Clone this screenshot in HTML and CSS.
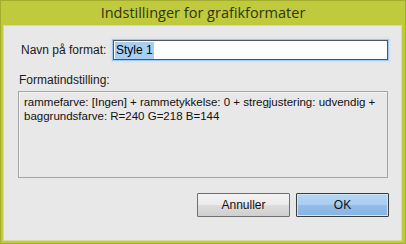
FILE: index.html
```html
<!DOCTYPE html>
<html>
<head>
<meta charset="utf-8">
<link rel="stylesheet" href="styles.css">
</head>
<body>
<div class="window">
  <div class="titlebar">Indstillinger for grafikformater</div>
  <div class="client">
    <div class="name-row">
      <label class="label name-label">Navn på format:</label>
      <div class="input"><span class="sel">Style 1</span></div>
    </div>
    <div class="label section-label">Formatindstilling:</div>
    <div class="box">rammefarve: [Ingen] + rammetykkelse: 0 + stregjustering: udvendig + baggrundsfarve: R=240 G=218 B=144</div>
    <div class="buttons">
      <div class="btn">Annuller</div>
      <div class="btn btn-default">OK</div>
    </div>
  </div>
</div>
</body>
</html>
```

FILE: styles.css
```css
* { box-sizing: border-box; }
html, body { margin: 0; padding: 0; }
body {
  width: 406px;
  height: 244px;
  font-family: "Liberation Sans", Arial, sans-serif;
  font-size: 12px;
  color: #000;
}
.window {
  width: 406px;
  height: 244px;
  background: #bfcb3c;
  border: 1px solid #a3ad30;
  display: flex;
  flex-direction: column;
}
.titlebar {
  height: 24px;
  line-height: 23px;
  text-align: center;
  font-family: "Open Sans", "Noto Sans", sans-serif;
  font-size: 14.5px;
  color: #2f3515;
}
.client {
  flex: 1;
  margin: 0 3px 2px 2px;
  background: #e8e8e8;
  border: 1px solid #d6dc9a;
  padding: 0 0 0 14px;
  display: flex;
  flex-direction: column;
}
.name-row {
  display: flex;
  align-items: center;
  margin-top: 14px;
  height: 20px;
}
.name-label {
  margin-left: 3px;
  width: 92px;
}
.label { color: #1a1a1a; }
.input {
  width: 275px;
  height: 20px;
  background: #fff;
  border: 1px solid #555;
  box-shadow: 0 0 0 1px #9ec8ee, 0 0 2px 2px #cfe3f6;
  padding: 1px 0 0 1px;
  display: flex;
  align-items: center;
}
.sel {
  background: #a8cff0;
  padding: 1px 1px 2px 1px;
  line-height: 14px;
}
.section-label {
  margin-top: 13px;
  margin-left: 1px;
  line-height: 14px;
}
.box {
  margin-top: 4px;
  width: 370px;
  height: 87px;
  border: 1px solid #a5a5a5;
  box-shadow: inset 1px 1px 0 #f4f4f4;
  padding: 3px 3px 0 5px;
  font-size: 11.5px;
  line-height: 14px;
  color: #111;
}
.buttons {
  display: flex;
  justify-content: flex-end;
  gap: 6px;
  margin-top: 15px;
  width: 371px;
}
.btn {
  width: 93px;
  height: 24px;
  border: 1px solid #707070;
  border-radius: 1px;
  background: linear-gradient(#f3f3f3, #ebebeb 50%, #dddddd 50%, #cfcfcf);
  text-align: center;
  line-height: 22px;
  color: #111;
}
.btn-default {
  border-color: #3c3c3c;
  background: linear-gradient(#b6d7f4, #a8cdf0 50%, #93bde9 50%, #87b3e3);
  box-shadow: inset 0 0 0 1px #cfe5f8;
}
```
